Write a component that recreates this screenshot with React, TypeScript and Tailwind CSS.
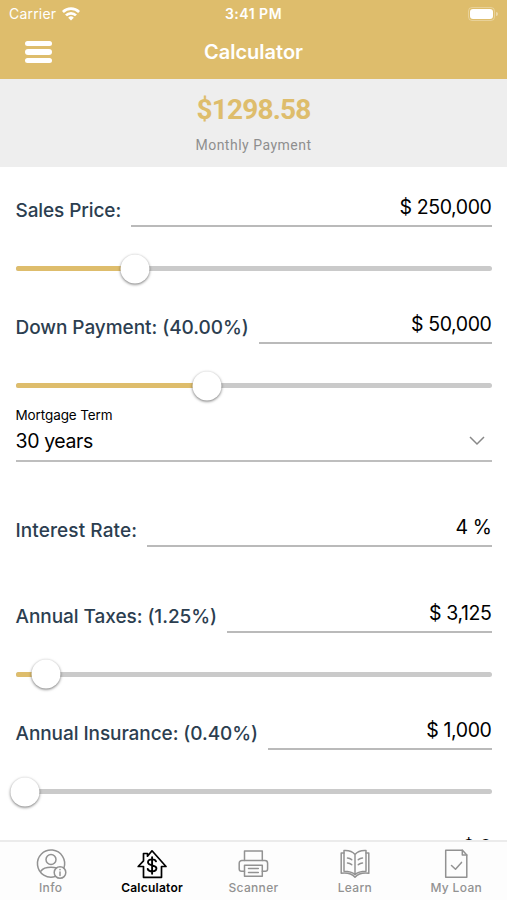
import type { ReactNode } from "react";
import clsx from "clsx";

type FieldProps = {
  label: string;
  value: string;
  labelClass: string;
  className?: string;
};

function Field({ label, value, labelClass, className }: FieldProps) {
  return (
    <div className={clsx("flex h-15 items-end", className)}>
      <div
        className={clsx(
          "shrink-0 whitespace-nowrap pb-[3px] text-[19px] leading-[26px] font-medium text-[#2c3e50]",
          labelClass
        )}
      >
        {label}
      </div>
      <div className="flex-1 border-b-2 border-[#bababa] pb-[5px] text-right text-[19.5px] leading-[26px] tracking-[-0.4px] text-black">
        {value}
      </div>
    </div>
  );
}

function Slider({ position }: { position: number }) {
  return (
    <div className="h-[57.4px] pt-[39px]">
      <div className="relative h-[5px] rounded-full bg-[#cacaca]">
        <div className="h-full rounded-full bg-[#debd6c]" style={{ width: position }} />
        <div
          className="absolute top-1/2 size-[29px] -translate-x-1/2 -translate-y-1/2 rounded-full bg-white shadow-[0_1px_3px_rgba(0,0,0,0.55)]"
          style={{ left: position }}
        />
      </div>
    </div>
  );
}

function Icon({ children }: { children: ReactNode }) {
  return (
    <svg
      viewBox="0 0 32 32"
      className="size-8"
      fill="none"
      stroke="currentColor"
      strokeWidth="1.5"
      strokeLinejoin="round"
      strokeLinecap="round"
    >
      {children}
    </svg>
  );
}

const TABS = [
  {
    label: "Info",
    icon: (
      <Icon>
        <path d="M20.5 28.4A13.6 13.6 0 1 1 28.9 20" />
        <circle cx="16" cy="11.5" r="5" />
        <path d="M6 23c2-3 5.500-3.800 10-3.800 2.200 0 4 .2 5.500.7" />
        <circle cx="25" cy="24.500" r="5.800" />
        <path d="M25 24v3.500M25 21.500v.3" />
      </Icon>
    ),
  },
  {
    label: "Calculator",
    active: true,
    icon: (
      <Icon>
        <path d="M7.500 29.300V18.500H2.200L7.500 12.800V5.500h4v2.700L16 2.800l14 15.700h-4.500v10.800z" strokeWidth="1.700" />
        <path
          d="M20 13.300c-.5-1.200-2-1.900-4-1.900-2.300 0-4 1-4 2.900 0 4.200 8.400 1.900 8.400 6 0 2-1.800 3.100-4.200 3.100-2.300 0-4-1-4.500-2.500M16.100 9.100v16.600"
          strokeWidth="1.900"
        />
      </Icon>
    ),
  },
  {
    label: "Scanner",
    icon: (
      <Icon>
        <path d="M7.500 12.500V3h17.800v9.500" />
        <path d="M7.500 23.300H4.500a2.300 2.300 0 0 1-2.300-2.300v-5.800a2.700 2.700 0 0 1 2.700-2.700h23a2.700 2.700 0 0 1 2.700 2.700V21a2.300 2.300 0 0 1-2.300 2.300h-3" />
        <path d="M7.500 17.300h17.800v10.900H7.500zM11.500 20.500h9.800M11.500 24.500h9.800" />
      </Icon>
    ),
  },
  {
    label: "Learn",
    icon: (
      <Icon>
        <path d="M16 6.500C13.500 3.500 9.500 2.300 5 2.600v20.600c4.500 0 8.500 1 11 3.500 2.500-2.500 6.500-3.500 11-3.500V2.600c-4.500-.3-8.500.9-11 3.900zM16 6.500V26.700" />
        <path d="M5 5H2.200v20.300c5.300-.6 10.500.2 13.800 4 3.300-3.800 8.500-4.600 13.800-4V5H27" />
        <path d="M8.500 10c1.700.2 3 .8 4.200 1.700M8.500 15c1.700.2 3 .8 4.200 1.700M23.500 10c-1.700.2-3 .8-4.200 1.700M23.500 15c-1.700.2-3 .8-4.200 1.700" />
      </Icon>
    ),
  },
  {
    label: "My Loan",
    icon: (
      <Icon>
        <path d="M5.700 2.300h16.800l4.300 4.600v22.300H5.700z" />
        <path d="M22.300 2.300v4.800h4.500M11.500 17.500l4 3.700 6-6.800" />
      </Icon>
    ),
  },
];

function StatusBar() {
  return (
    <div className="grid h-[27px] grid-cols-3 items-center px-[9px] text-[14px] tracking-[0.2px] text-white">
      <div className="flex items-center gap-[6px]">
        <span>Carrier</span>
        <svg viewBox="0 0 18 14" className="h-[14px] w-[18px]" fill="none" stroke="currentColor" strokeWidth="2.7">
          <path d="M.9 5a11.500 11.500 0 0 1 16.200 0M4 8.400a7 7 0 0 1 10 0" />
          <path d="M9 13.500 6.200 10.700a4 4 0 0 1 5.600 0z" fill="currentColor" stroke="none" />
        </svg>
      </div>
      <div className="text-center font-semibold tracking-[0.5px]">3:41 PM</div>
      <div className="flex items-center justify-end gap-px">
        <div className="h-[14px] w-[27px] rounded-[4px] border border-white/30 p-px">
          <div className="h-full rounded-[3px] bg-white" />
        </div>
        <div className="h-1 w-[2px] rounded-r bg-white/40" />
      </div>
    </div>
  );
}

export default function App() {
  return (
    <div className="flex h-[900px] w-[507px] flex-col overflow-hidden bg-white font-['Inter',sans-serif]">
      <header className="h-[79px] shrink-0 bg-[#debd6c]">
        <StatusBar />
        <div className="grid h-[50px] grid-cols-[1fr_auto_1fr] items-center px-[25px]">
          <button className="flex w-[27px] flex-col gap-[3px]" aria-label="Menu">
            <span className="h-[5.500px] rounded-full bg-white" />
            <span className="h-[5.500px] rounded-full bg-white" />
            <span className="h-[5.500px] rounded-full bg-white" />
          </button>
          <h1 className="text-[20px] font-semibold text-white">Calculator</h1>
        </div>
      </header>

      <section className="h-[88px] shrink-0 bg-[#eeeeee] pt-[14px] text-center font-['Roboto',sans-serif]">
        <div className="text-[28px] leading-[34px] font-bold tracking-[-0.8px] text-[#debd6c]">$1298.58</div>
        <div className="mt-[8px] text-[14px] leading-5 tracking-[0.5px] text-[#8e8e8e]">Monthly Payment</div>
      </section>

      <main className="min-h-0 flex-1 overflow-hidden px-[15.500px]">
        <Field label="Sales Price:" value="$ 250,000" labelClass="w-[115px] tracking-[-0.1px]" />
        <Slider position={119} />
        <Field label="Down Payment: (40.00%)" value="$ 50,000" labelClass="w-[243px] tracking-[-0.05px]" />
        <Slider position={191} />

        <div className="flex h-[60px] flex-col border-b-2 border-[#bebebe] pt-[4px] text-black">
          <div className="text-[13.500px] leading-[18px] tracking-[-0.1px]">Mortgage Term</div>
          <div className="mt-[4px] flex items-center justify-between pr-[7px]">
            <span className="text-[19.500px] leading-[26px] tracking-[-0.4px]">30 years</span>
            <svg viewBox="0 0 16 10" className="h-[10px] w-4" fill="none" stroke="#888" strokeWidth="1.500">
              <path d="m1 1 7 7 7-7" />
            </svg>
          </div>
        </div>

        <Field
          label="Interest Rate:"
          value="4 %"
          labelClass="w-[131px] tracking-[0.1px]"
          className="mt-[25.500px]"
        />
        <Field
          label="Annual Taxes: (1.25%)"
          value="$ 3,125"
          labelClass="w-[211px] tracking-[-0.05px]"
          className="mt-[25.500px]"
        />
        <Slider position={30} />
        <Field label="Annual Insurance: (0.40%)" value="$ 1,000" labelClass="w-[252px] tracking-[-0.07px]" />
        <Slider position={9.5} />
        {/* next row, scrolled mostly under the tab bar */}
        <Field label="" value="$ 0" labelClass="w-[115px]" className="-mt-px" />
      </main>

      <nav className="grid h-[60px] shrink-0 grid-cols-5 border-t-2 border-[#ebebeb] bg-[#fdfdfd] pt-[6px]">
        {TABS.map(({ label, icon, active }) => (
          <button
            key={label}
            className={clsx(
              "flex flex-col items-center text-[12px] leading-4",
              active ? "font-semibold tracking-[0.25px] text-black" : "font-medium tracking-[0.35px] text-[#929292]"
            )}
          >
            {icon}
            {label}
          </button>
        ))}
      </nav>
    </div>
  );
}
